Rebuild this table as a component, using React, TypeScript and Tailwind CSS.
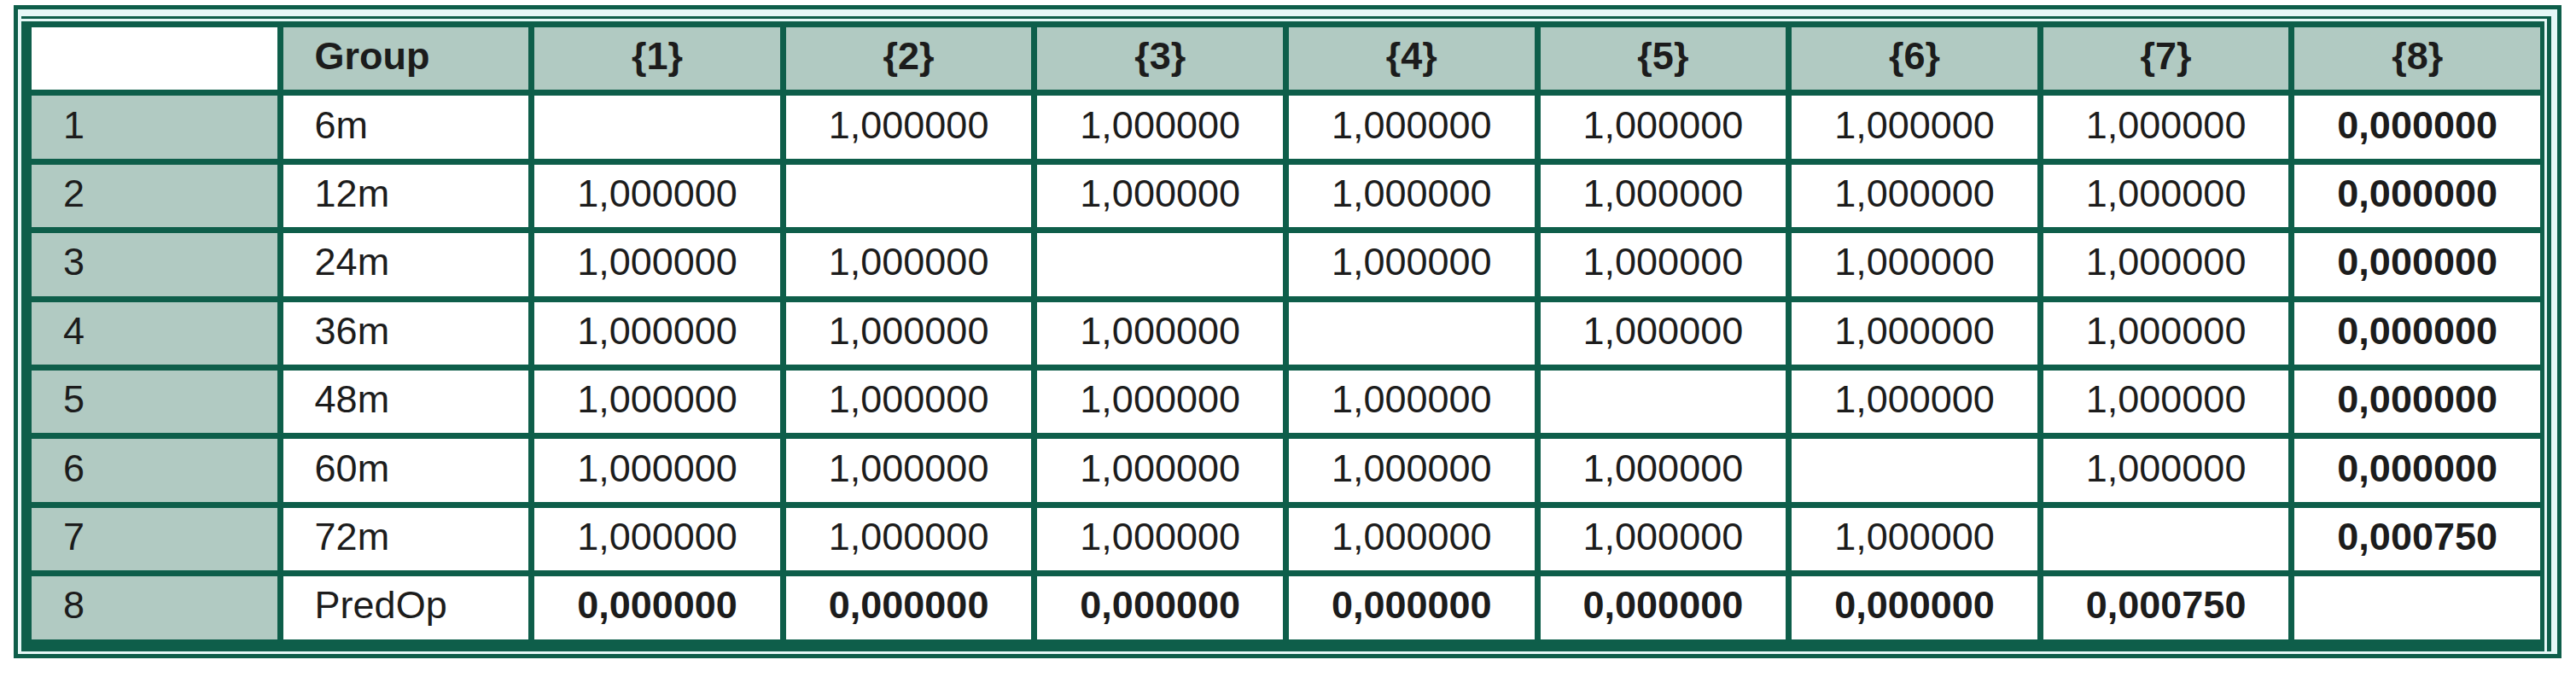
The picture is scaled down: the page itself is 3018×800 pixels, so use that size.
import * as React from 'react';

const DARK = 'border-[#0e5e4a]';
const ONE = '1,000000';
const ZERO = '0,000000';
const SMALL = '0,000750';

const GROUPS = ['6m', '12m', '24m', '36m', '48m', '60m', '72m', 'PredOp'];

// value of cell (row i, col j) in the pairwise table
function cellValue(i: number, j: number): { text: string; bold: boolean } {
  if (i === j) return { text: '', bold: false };
  const last = GROUPS.length - 1;
  if (i === last || j === last) {
    const other = i === last ? j : i;
    return { text: other === 6 ? SMALL : ZERO, bold: true };
  }
  return { text: ONE, bold: false };
}

export default function App() {
  const cell = 'h-[73.4px] flex items-center pb-[6px] text-[45px] leading-none';
  return (
    <div className="w-[3018px] h-[800px] bg-white pt-[6px] pl-[16px] font-['Liberation_Sans',Arial,sans-serif] text-[#1c1c1c]">
      <div className={`w-[2985px] border-[5px] ${DARK} bg-[#e6f8f7] pt-[8px] pr-[7px] pb-[3px] pl-[4px]`}>
        <div className={`border-t-[3px] border-r-[5px] ${DARK} pt-[3px] pr-[3px]`}>
          <div className={`grid grid-cols-10 gap-[7px] bg-[#0e5e4a] border-t-[7px] border-l-[12px] border-r-[5px] border-b-[14px] ${DARK}`}>
            {/* header */}
            <div className={`${cell} bg-white`} />
            <div className={`${cell} bg-[#b1cac2] font-bold px-[37px]`}>Group</div>
            {GROUPS.map((_, j) => (
              <div key={j} className={`${cell} bg-[#b1cac2] font-bold justify-center`}>
                {`{${j + 1}}`}
              </div>
            ))}

            {GROUPS.map((g, i) => (
              <React.Fragment key={g}>
                <div className={`${cell} bg-[#b1cac2] px-[37px]`}>{i + 1}</div>
                <div className={`${cell} bg-white px-[37px]`}>{g}</div>
                {GROUPS.map((_, j) => {
                  const v = cellValue(i, j);
                  return (
                    <div key={j} className={`${cell} bg-white justify-center ${v.bold ? 'font-bold' : ''}`}>
                      {v.text}
                    </div>
                  );
                })}
              </React.Fragment>
            ))}
          </div>
        </div>
      </div>
    </div>
  );
}
